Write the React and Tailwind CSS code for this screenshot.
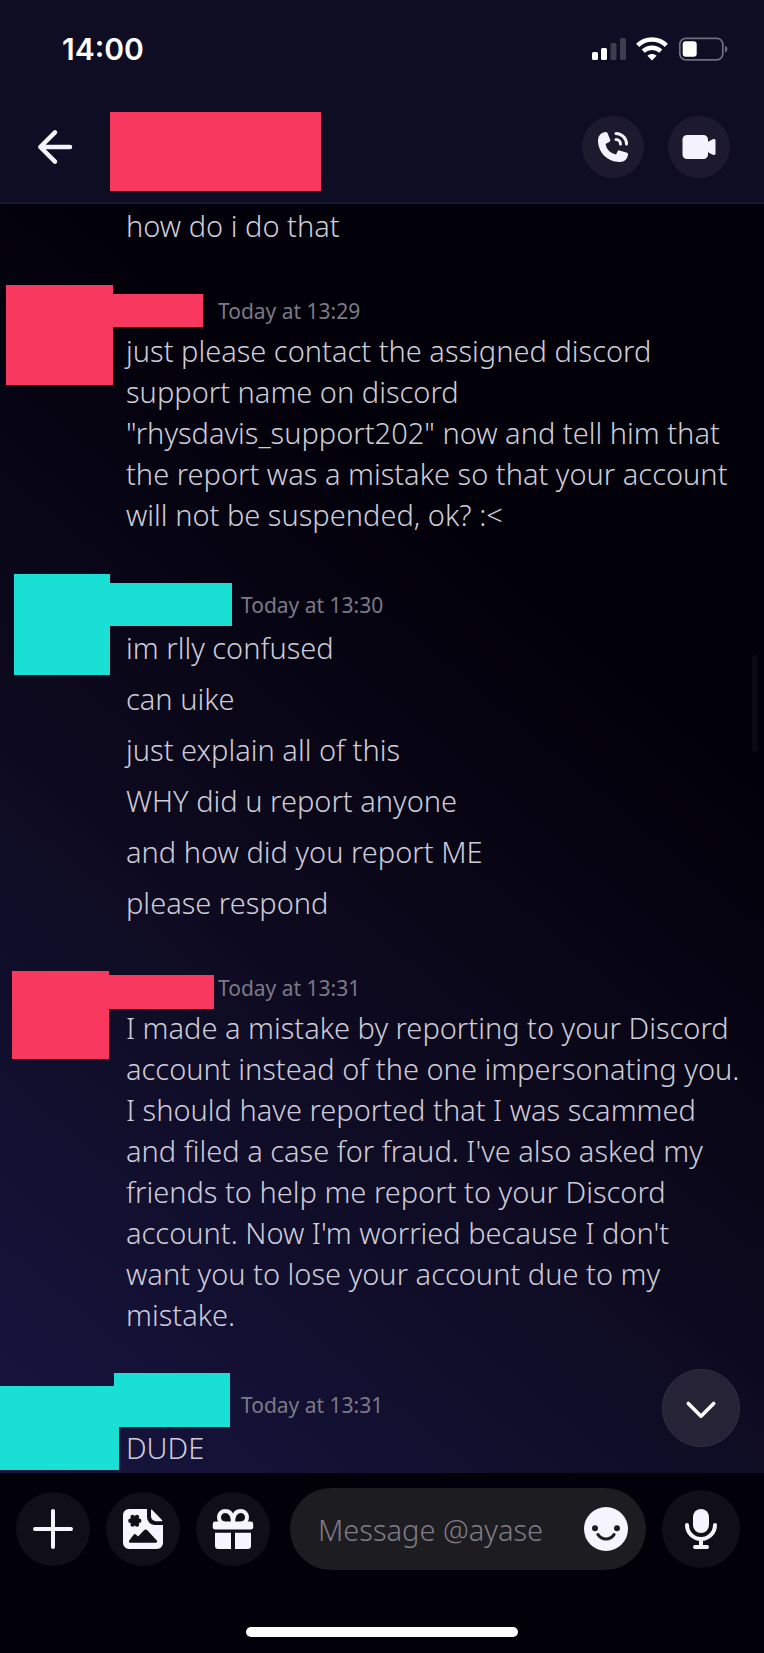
import React, { useState } from "react";

const messages = [
  {
    id: 1,
    author: "them",
    time: "Today at 13:29",
    avatarMask: "left-[6px] -top-[9px] w-[107px] h-[100px]",
    nameMask: "left-[112px] top-0 w-[91px] h-[33px]",
    lines: [
      'just please contact the assigned discord support name on discord "rhysdavis_support202" now and tell him that the report was a mistake so that your account will not be suspended, ok? :<',
    ],
  },
  {
    id: 2,
    author: "me",
    time: "Today at 13:30",
    avatarMask: "left-[14px] -top-[9px] w-[96px] h-[101px]",
    nameMask: "left-[109px] top-0 w-[123px] h-[43px]",
    lines: [
      "im rlly confused",
      "can uike",
      "just explain all of this",
      "WHY did u report anyone",
      "and how did you report ME",
      "please respond",
    ],
  },
  {
    id: 3,
    author: "them",
    time: "Today at 13:31",
    avatarMask: "left-[12px] top-0 w-[97px] h-[88px]",
    nameMask: "left-[108px] top-[4px] w-[106px] h-[34px]",
    lines: [
      "I made a mistake by reporting to your Discord account instead of the one impersonating you. I should have reported that I was scammed and filed a case for fraud. I've also asked my friends to help me report to your Discord account. Now I'm worried because I don't\nwant you to lose your account due to my\nmistake.",
    ],
  },
  {
    id: 4,
    author: "me",
    time: "Today at 13:31",
    avatarMask: "left-0 top-[3px] w-[119px] h-[84px]",
    nameMask: "left-[114px] -top-[10px] w-[116px] h-[54px]",
    lines: ["DUDE"],
  },
];

const ArrowLeftIcon = () => (
  <svg viewBox="0 0 40 40" className="h-10 w-10" fill="none" stroke="currentColor" strokeWidth="4.500" strokeLinecap="round" strokeLinejoin="round">
    <path d="M35 20H6M20 5.300L5.300 20L20 34.700" />
  </svg>
);

const PhoneIcon = () => (
  <svg viewBox="0 0 24 24" className="h-9 w-9" fill="currentColor">
    <path d="M2 7.400A5.400 5.400 0 0 1 7.400 2c.36 0 .7.22.83.55l1.930 4.640a1 1 0 0 1-.43 1.250L7 10a8.520 8.520 0 0 0 7 7l1.120-2.240a1 1 0 0 1 1.190-.51l5.060 1.560c.38.11.63.46.63.85C22 19.600 19.600 22 16.660 22h-.37C8.390 22 2 15.600 2 7.710V7.400Z" />
    <path d="M13 3a1 1 0 0 1 1-1 8 8 0 0 1 8 8 1 1 0 1 1-2 0 6 6 0 0 0-6-6 1 1 0 0 1-1-1Z" />
    <path d="M13 7a1 1 0 0 1 1-1 4 4 0 0 1 4 4 1 1 0 1 1-2 0 2 2 0 0 0-2-2 1 1 0 0 1-1-1Z" />
  </svg>
);

const VideoIcon = () => (
  <svg viewBox="0 0 24 24" className="h-9 w-9" fill="currentColor">
    <path d="M4 4a3 3 0 0 0-3 3v10a3 3 0 0 0 3 3h11a3 3 0 0 0 3-3v-2.120a1 1 0 0 0 .55.9l3 1.500a1 1 0 0 0 1.450-.9V7.620a1 1 0 0 0-1.450-.9l-3 1.500a1 1 0 0 0-.55.9V7a3 3 0 0 0-3-3H4Z" />
  </svg>
);

const PlusIcon = () => (
  <svg viewBox="0 0 24 24" className="h-12 w-12" fill="none" stroke="currentColor" strokeWidth="2" strokeLinecap="round">
    <path d="M12 3v18M3 12h18" />
  </svg>
);

const StickerIcon = () => (
  <svg viewBox="0 0 24 24" className="h-12 w-12" fill="currentColor">
    <path d="M14 2v4a4 4 0 0 0 4 4h4v9a3 3 0 0 1-3 3H5a3 3 0 0 1-3-3V5a3 3 0 0 1 3-3h9Z" />
    <path d="M16 2.600c0-.3.3-.4.5-.2l5.100 5.200c.2.2.1.5-.2.5H18.500A2.500 2.500 0 0 1 16 5.600Z" />
    <g fill="#100e16">
      <circle cx="7.900" cy="7.900" r="2.300" />
      <circle cx="5.700" cy="7.900" r="1.100" />
      <circle cx="10.100" cy="7.900" r="1.100" />
      <circle cx="6.800" cy="6" r="1.100" />
      <circle cx="9" cy="6" r="1.100" />
      <circle cx="6.800" cy="9.800" r="1.100" />
      <circle cx="9" cy="9.800" r="1.100" />
      <path d="M5.100 17.800 7.200 15c.4-.6 1-.6 1.400-.1l.9.900 2.900-3.100c.6-.6 1.300-.6 1.900 0l4.600 5.100c.4.5.1 1.100-.5 1.100H5.600c-.6 0-.8-.6-.5-1.100Z" />
    </g>
  </svg>
);

const GiftIcon = () => (
  <svg viewBox="0 0 24 24" className="h-12 w-12" fill="currentColor">
    <g fill="none" stroke="currentColor" strokeWidth="2">
      <path d="M12 9.500C12 5.500 10.800 3 8.200 3A3.100 3.100 0 0 0 5 6.100C5 7.800 6.200 9 8 9.500" />
      <path d="M12 9.500C12 5.500 13.200 3 15.800 3A3.100 3.100 0 0 1 19 6.100C19 7.800 17.800 9 16 9.500" />
    </g>
    <rect x="1.900" y="8.300" width="20.200" height="4" rx="1.200" />
    <path d="M3 13.900h8V22H4.600A1.600 1.600 0 0 1 3 20.400ZM13 13.900h8v6.500a1.600 1.600 0 0 1-1.600 1.600H13Z" />
  </svg>
);

const SmileIcon = () => (
  <svg viewBox="0 0 24 24" className="h-12 w-12">
    <circle cx="12" cy="12" r="11" fill="currentColor" />
    <circle cx="6.500" cy="11.600" r="1.500" fill="#1d1c20" />
    <circle cx="17.500" cy="11.600" r="1.500" fill="#1d1c20" />
    <path d="M8 14.800c1 1.400 2.300 2.200 4 2.200s3-.8 4-2.200" fill="none" stroke="#1d1c20" strokeWidth="1.600" strokeLinecap="round" />
  </svg>
);

const MicIcon = () => (
  <svg viewBox="0 0 24 24" className="h-12 w-12" fill="none" stroke="currentColor" strokeWidth="2" strokeLinecap="round">
    <rect x="8" y="2" width="8" height="12" rx="4" fill="currentColor" stroke="none" />
    <path d="M5 10a7 7 0 0 0 14 0M12 17v4M9 21h6" />
  </svg>
);

const ChevronDownIcon = () => (
  <svg viewBox="0 0 36 36" className="h-9 w-9" fill="none" stroke="currentColor" strokeWidth="3.600" strokeLinecap="round" strokeLinejoin="round">
    <path d="M5.300 13.500L18 26.200L30.700 13.500" />
  </svg>
);

const StatusIcons = () => (
  <div className="flex items-center gap-[10px]">
    {/* Signal */}
    <svg viewBox="0 0 34 24" className="h-6 w-[34px]" fill="#fff">
      <rect x="0" y="15" width="6" height="8" rx="1.500" />
      <rect x="9" y="11" width="6" height="12" rx="1.500" />
      <rect x="18.500" y="6" width="6" height="17" rx="1.500" fill="#3f3c50" />
      <rect x="28" y="1" width="6" height="22" rx="1.500" fill="#3f3c50" />
    </svg>
    {/* Wi-Fi */}
    <svg viewBox="0 0 32 24" className="h-6 w-8" fill="none" stroke="#fff" strokeWidth="4.400">
      <path d="M1.600 8.400C10 .6 22 .6 30.400 8.400" />
      <path d="M7.200 14.200C12.300 9.500 19.700 9.500 24.800 14.200" />
      <path d="M16 23.400l-4.600-4.700c2.700-2.200 6.500-2.200 9.200 0Z" fill="#fff" stroke="none" />
    </svg>
    {/* Battery */}
    <svg viewBox="0 0 50 24" className="h-6 w-[50px]">
      <rect x="1.800" y="1.300" width="43" height="21.500" rx="6" fill="none" stroke="#6f6c7d" strokeWidth="1.800" />
      <rect x="4.700" y="4.300" width="14" height="15.500" rx="3" fill="#fff" />
      <path d="M47 8.700c3.200.8 3.200 6 0 6.800Z" fill="#6f6c7d" />
    </svg>
  </div>
);

const Message = ({ message }) => {
  const isMine = message.author === "me";
  const maskColor = isMine ? "bg-[#1adfd5]" : "bg-[#f8385f]";

  return (
    <article className="pt-12">
      <div className="relative pl-[126px] pr-5">
        {/* Redacted avatar and name */}
        <span className={`absolute ${maskColor} ${message.avatarMask}`} />
        <span className={`absolute ${maskColor} ${message.nameMask}`} />

        <header className={isMine ? "h-11 pt-[7px] pl-[115px]" : "h-9 pt-[2px] pl-[92px]"}>
          <time className="block text-[21px] font-normal leading-[30px] text-[#7c7987]">{message.time}</time>
        </header>
        <div className="flex flex-col gap-[10px]">
          {message.lines.map((line) => (
            <p key={line} className="whitespace-pre-line">{line}</p>
          ))}
        </div>
      </div>
    </article>
  );
};

const App = () => {
  const [draft, setDraft] = useState("");

  return (
    <div className="flex min-h-screen flex-col overflow-hidden bg-[#020008] font-['Noto_Sans',sans-serif] text-[29px] font-light leading-[41px] text-[#cfccd9]">
      {/* === TOP BAR === */}
      <header className="border-b-2 border-[#1b1730] bg-[#0f0d23] pt-8 pb-5">
        <div className="flex h-[34px] items-center justify-between pl-[62px] pr-9">
          <span className="font-['Inter',sans-serif] text-[30px] font-semibold leading-[34px] text-white">14:00</span>
          <StatusIcons />
        </div>
        <div className="mt-[46px] flex h-[70px] items-center pl-[35px] pr-[34px] text-[#f4f2fd]">
          <button aria-label="Back">
            <ArrowLeftIcon />
          </button>
          <span className="ml-[35px] h-[79px] w-[211px] self-start bg-[#f8385f]" />
          <div className="ml-auto flex gap-6">
            <button aria-label="Start voice call" className="flex h-[62px] w-[62px] items-center justify-center rounded-full bg-[#1d1a30]">
              <PhoneIcon />
            </button>
            <button aria-label="Start video call" className="flex h-[62px] w-[62px] items-center justify-center rounded-full bg-[#1d1a30]">
              <VideoIcon />
            </button>
          </div>
        </div>
      </header>

      {/* === MESSAGES === */}
      <main className="relative flex-1 bg-linear-[40deg] from-[#171540] via-[#0d0a1f] via-40% to-[#020009] to-70% pt-px pb-[3px]">
        <p className="pl-[126px] pr-5">how do i do that</p>
        {messages.map((message) => (
          <Message key={message.id} message={message} />
        ))}

        <span className="absolute right-[6px] top-[451px] h-[97px] w-[6px] rounded-full bg-[#0b0912]" />
        <button
          aria-label="Jump to latest message"
          className="absolute bottom-[26px] right-6 flex h-[78px] w-[78px] items-center justify-center rounded-full border border-[#332f46] bg-[#262336] text-white"
        >
          <ChevronDownIcon />
        </button>
      </main>

      {/* === COMPOSER === */}
      <footer className="bg-[#020008] pt-[15px] pb-4 text-[#f6f4fe]">
        <form className="flex items-center gap-4 pl-4 pr-6" onSubmit={(e) => e.preventDefault()}>
          <button type="button" aria-label="Add attachment" className="flex h-[74px] w-[74px] shrink-0 items-center justify-center rounded-full bg-[#100e16]">
            <PlusIcon />
          </button>
          <button type="button" aria-label="Stickers" className="flex h-[74px] w-[74px] shrink-0 items-center justify-center rounded-full bg-[#100e16]">
            <StickerIcon />
          </button>
          <button type="button" aria-label="Send a gift" className="flex h-[74px] w-[74px] shrink-0 items-center justify-center rounded-full bg-[#100e16]">
            <GiftIcon />
          </button>
          <div className="ml-1 flex h-[82px] min-w-0 flex-1 items-center rounded-full bg-[#1d1c20] pl-7 pr-4">
            <input
              type="text"
              aria-label="Message"
              value={draft}
              onChange={(e) => setDraft(e.target.value)}
              placeholder="Message @ayase"
              className="min-w-0 flex-1 bg-transparent outline-none placeholder:text-[#7f7c88]"
            />
            <button type="button" aria-label="Emoji">
              <SmileIcon />
            </button>
          </div>
          <button type="button" aria-label="Record voice message" className="flex h-[78px] w-[78px] shrink-0 items-center justify-center rounded-full bg-[#100e16]">
            <MicIcon />
          </button>
        </form>
        <div className="mx-auto mt-[57px] h-[10px] w-[272px] rounded-full bg-white" />
      </footer>
    </div>
  );
};

export default App;
